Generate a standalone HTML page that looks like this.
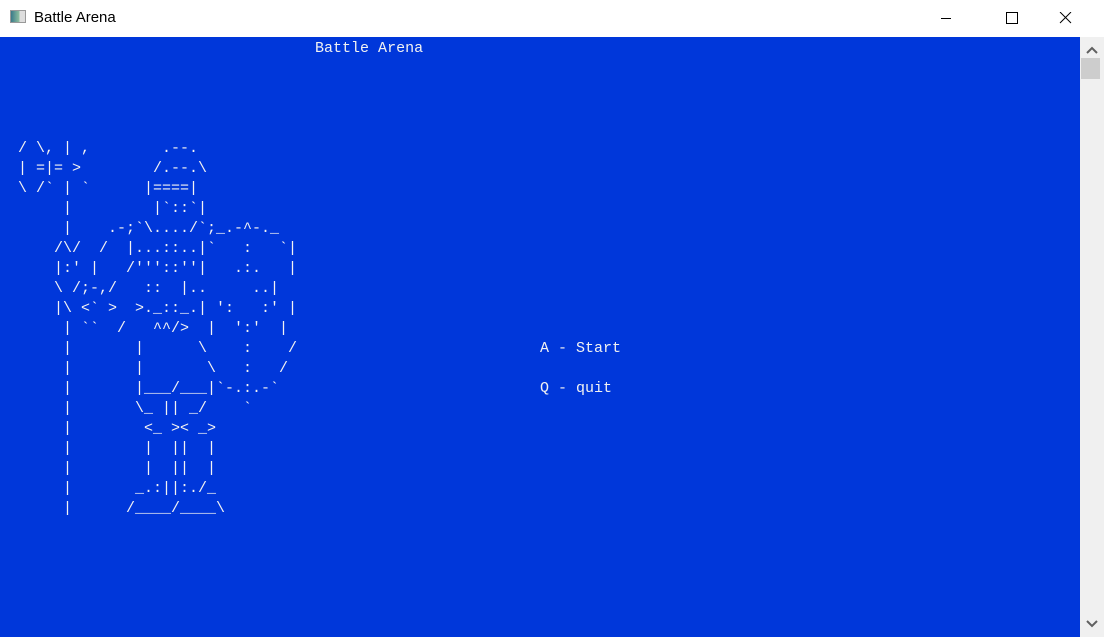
<!DOCTYPE html>
<html><head><meta charset="utf-8"><style>
html,body{margin:0;padding:0;width:1104px;height:637px;overflow:hidden;background:#fff;}
.tb{position:absolute;left:0;top:0;width:1104px;height:37px;background:#fff;font-family:"Liberation Sans",sans-serif;font-size:15px;color:#000;}
.tb .t{position:absolute;left:34px;top:9px;}
.ic{position:absolute;left:10px;top:10px;width:16px;height:13px;border:1px solid #999;background:linear-gradient(90deg,#3a7a8a,#8fc0a0 60%,#ddd 60%);box-sizing:border-box;}
.con{position:absolute;left:0;top:37px;width:1080px;height:600px;background:#0037da;}
pre{position:absolute;left:0;top:2px;margin:0;font-family:"Liberation Mono",monospace;font-size:15px;line-height:20px;color:#f2f2f2;}
.sb{position:absolute;left:1080px;top:37px;width:24px;height:600px;background:#f0f0f0;}
.th{position:absolute;left:1081px;top:58px;width:19px;height:21px;background:#cdcdcd;}
</style></head><body>
<div class="tb"><div class="ic"></div><div class="t">Battle Arena</div>
<svg style="position:absolute;left:940px;top:12px" width="140" height="14"><line x1="1" y1="6.5" x2="11" y2="6.5" stroke="#000"/><rect x="66.5" y="0.5" width="11" height="11" fill="none" stroke="#000"/><path d="M120 0L131 11M131 0L120 11" stroke="#000"/></svg></div>
<div class="con"><pre>                                   Battle Arena




  / \, | ,        .--.
  | =|= >        /.--.\
  \ /` | `      |====|
       |         |`::`|
       |    .-;`\..../`;_.-^-._
      /\/  /  |...::..|`   :   `|
      |:' |   /'''::''|   .:.   |
      \ /;-,/   ::  |..     ..|
      |\ &lt;` &gt;  &gt;._::_.| ':   :' |
       | ``  /   ^^/&gt;  |  ':'  |
       |       |      \    :    /
       |       |       \   :   /
       |       |___/___|`-.:.-`
       |       \_ || _/    `
       |        &lt;_ &gt;&lt; _&gt;
       |        |  ||  |
       |        |  ||  |
       |       _.:||:./_
       |      /____/____\</pre>
<pre style="left:540px;top:302px">A - Start

Q - quit</pre></div>
<div class="sb"></div><div class="th"></div>
<svg style="position:absolute;left:1080px;top:37px" width="24" height="600"><path d="M7 16L12 11L17 16" stroke="#606060" stroke-width="2" fill="none"/><path d="M7 584L12 589L17 584" stroke="#606060" stroke-width="2" fill="none"/></svg>
</body></html>
